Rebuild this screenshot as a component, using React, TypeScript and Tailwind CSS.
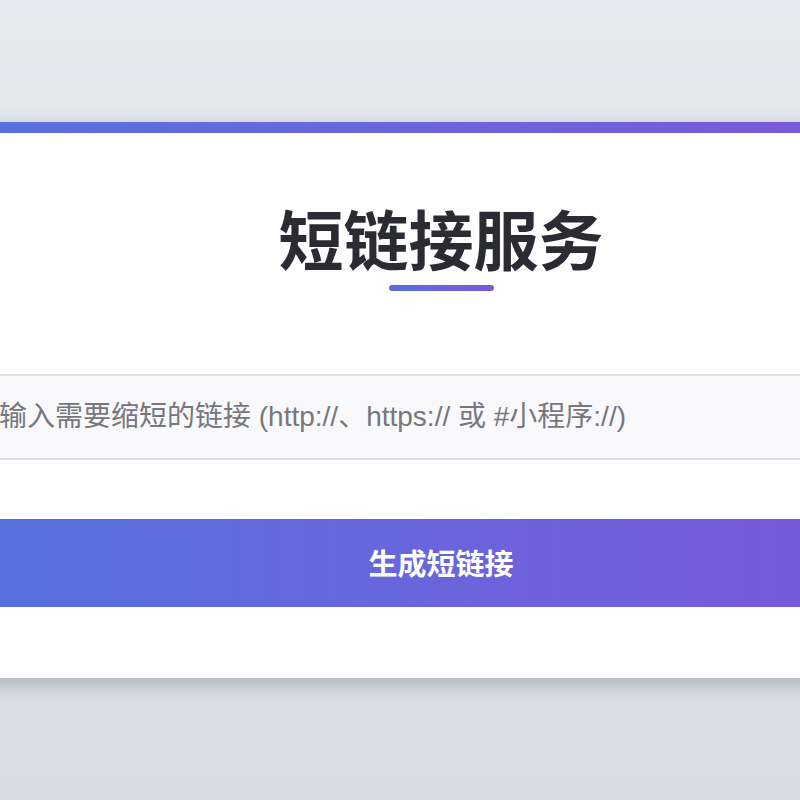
import { useState } from "react"

const ShortLinkPage = () => {
    const [url, setUrl] = useState("")

    return (
        <div
            className="min-h-screen overflow-hidden bg-gradient-to-b from-[#e6e9f0] to-[#d8dce4] pt-[122px]"
            style={{ fontFamily: '"Liberation Sans", "Noto Sans CJK SC", sans-serif' }}
        >
            {/* card is wider than the window on purpose */}
            <div className="ml-[-59px] w-[1000px] bg-white shadow-[0_6px_18px_rgba(60,64,80,0.28)]">
                <div className="h-[11px] bg-gradient-to-r from-[#5471dd] to-[#7d55d8]" />

                <div className="px-4 pt-[77px] pb-[71px]">
                    <h1 className="text-center text-[65px] leading-none font-bold text-[#2b2c33]">
                        短链接服务
                    </h1>
                    <div className="mx-auto mt-[10px] h-[6px] w-[105px] rounded-full bg-gradient-to-r from-[#5570dc] to-[#7a58d8]" />

                    <input
                        value={url}
                        onChange={e => setUrl(e.target.value)}
                        placeholder="请输入需要缩短的链接 (http://、https:// 或 #小程序://)"
                        className="mt-[83px] block h-[86px] w-full border-2 border-[#dedfe3] bg-[#f9f9fb] pl-[12px] text-[28px] text-[#333] outline-none placeholder:text-[#77777c]"
                    />

                    <button className="mt-[59px] flex h-[88px] w-full items-center justify-center bg-gradient-to-r from-[#5472de] to-[#7b56d9] pt-[6px] text-[29px] font-bold text-white">
                        生成短链接
                    </button>
                </div>
            </div>
        </div>
    )
}

export default function App() {
    return <ShortLinkPage />
}
